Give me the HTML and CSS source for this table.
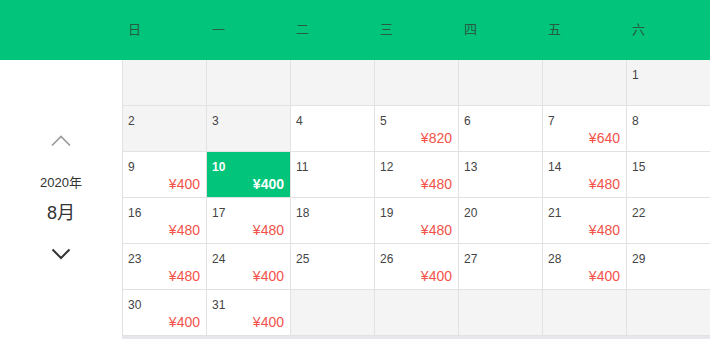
FILE: index.html
```html
<!DOCTYPE html>
<html lang="zh-CN">
<head>
<meta charset="utf-8">
<link rel="stylesheet" href="styles.css">
</head>
<body>
<div class="header">
  <div class="header-spacer"></div>
  <div class="wd">日</div><div class="wd">一</div><div class="wd">二</div><div class="wd">三</div><div class="wd">四</div><div class="wd">五</div><div class="wd">六</div>
</div>
<div class="main">
  <div class="side">
    <svg class="chev-up" width="20" height="13" viewBox="0 0 20 13"><polyline points="1,11.5 10,2.5 19,11.5" fill="none" stroke="#9a9a9a" stroke-width="1.6"/></svg>
    <div class="year">2020年</div>
    <div class="month">8月</div>
    <svg class="chev-down" width="20" height="12" viewBox="0 0 20 12"><polyline points="1.5,1.5 10,10 18.5,1.5" fill="none" stroke="#333" stroke-width="2"/></svg>
  </div>
  <div class="grid">
    <div class="cell off"></div><div class="cell off"></div><div class="cell off"></div><div class="cell off"></div><div class="cell off"></div><div class="cell off"></div>
    <div class="cell off"><span class="num">1</span></div>

    <div class="cell off"><span class="num">2</span></div>
    <div class="cell off"><span class="num">3</span></div>
    <div class="cell"><span class="num">4</span></div>
    <div class="cell"><span class="num">5</span><span class="price">¥820</span></div>
    <div class="cell"><span class="num">6</span></div>
    <div class="cell"><span class="num">7</span><span class="price">¥640</span></div>
    <div class="cell"><span class="num">8</span></div>

    <div class="cell"><span class="num">9</span><span class="price">¥400</span></div>
    <div class="cell active"><span class="num">10</span><span class="price">¥400</span></div>
    <div class="cell"><span class="num">11</span></div>
    <div class="cell"><span class="num">12</span><span class="price">¥480</span></div>
    <div class="cell"><span class="num">13</span></div>
    <div class="cell"><span class="num">14</span><span class="price">¥480</span></div>
    <div class="cell"><span class="num">15</span></div>

    <div class="cell"><span class="num">16</span><span class="price">¥480</span></div>
    <div class="cell"><span class="num">17</span><span class="price">¥480</span></div>
    <div class="cell"><span class="num">18</span></div>
    <div class="cell"><span class="num">19</span><span class="price">¥480</span></div>
    <div class="cell"><span class="num">20</span></div>
    <div class="cell"><span class="num">21</span><span class="price">¥480</span></div>
    <div class="cell"><span class="num">22</span></div>

    <div class="cell"><span class="num">23</span><span class="price">¥480</span></div>
    <div class="cell"><span class="num">24</span><span class="price">¥400</span></div>
    <div class="cell"><span class="num">25</span></div>
    <div class="cell"><span class="num">26</span><span class="price">¥400</span></div>
    <div class="cell"><span class="num">27</span></div>
    <div class="cell"><span class="num">28</span><span class="price">¥400</span></div>
    <div class="cell"><span class="num">29</span></div>

    <div class="cell"><span class="num">30</span><span class="price">¥400</span></div>
    <div class="cell"><span class="num">31</span><span class="price">¥400</span></div>
    <div class="cell off"></div><div class="cell off"></div><div class="cell off"></div><div class="cell off"></div><div class="cell off"></div>
  </div>
</div>
<div class="footer"></div>
</body>
</html>
```
FILE: styles.css
```css
* { box-sizing: border-box; }
html, body { margin: 0; padding: 0; }
body {
  width: 710px;
  height: 339px;
  overflow: hidden;
  background: #fff;
  font-family: "Liberation Sans", "Noto Sans CJK SC", sans-serif;
  color: #333;
}
.header {
  display: flex;
  align-items: center;
  height: 60px;
  background: #02c47b;
}
.header-spacer { width: 122px; flex: none; }
.wd {
  width: 84px;
  flex: none;
  padding-left: 6px;
  font-size: 13px;
  color: #275b42;
  padding-bottom: 3px;
}
.main {
  display: flex;
  height: 276px;
}
.side {
  width: 122px;
  flex: none;
  display: flex;
  flex-direction: column;
  align-items: center;
  padding-top: 74px;
}
.chev-up { display: block; }
.year {
  margin-top: 27px;
  font-size: 13px;
  line-height: 18px;
  color: #333;
}
.month {
  margin-top: 9px;
  font-size: 18px;
  line-height: 24px;
  color: #333;
}
.chev-down { display: block; margin-top: 23px; }
.grid {
  display: grid;
  grid-template-columns: repeat(7, 84px);
  grid-template-rows: repeat(6, 46px);
}
.cell {
  display: flex;
  flex-direction: column;
  justify-content: space-between;
  border-left: 1px solid #e2e2e2;
  border-bottom: 1px solid #e2e2e2;
  padding: 7px 6px 4px 5px;
  background: #fff;
}
.cell.off { background: #f4f4f4; }
.num {
  font-size: 12px;
  line-height: 16px;
  color: #444;
}
.price {
  align-self: flex-end;
  font-size: 14px;
  line-height: 17px;
  color: #f2524a;
}
.cell.active { background: #02c47b; }
.cell.active .num,
.cell.active .price { color: #fff; font-weight: bold; }
.footer {
  height: 3px;
  margin-left: 122px;
  background: #e6e6ec;
}
```
